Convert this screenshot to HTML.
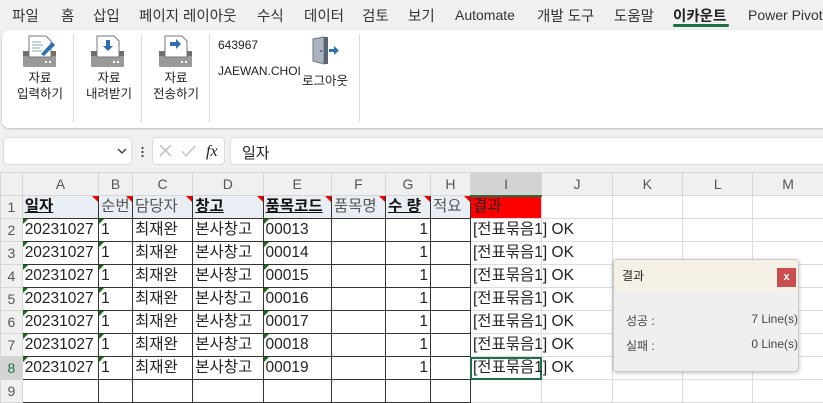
<!DOCTYPE html>
<html><head><meta charset="utf-8"><style>
*{box-sizing:border-box;margin:0;padding:0}
body{width:823px;height:403px;overflow:hidden;background:#f0f0f0;font-family:"Liberation Sans","Noto Sans CJK KR",sans-serif;position:relative;color:#222}
.tab{position:absolute;top:5px;font-size:14.5px;color:#333;white-space:nowrap}
.rib{position:absolute;left:2px;top:30px;width:830px;height:98px;background:#fff;border-radius:7px;box-shadow:0 1px 2px #bbb}
.sep{position:absolute;top:4px;width:1px;height:88px;background:#ddd}
.lbl{position:absolute;font-size:12.5px;color:#222;text-align:center;line-height:16px;width:60px}
.fb{position:absolute;background:#fff;border:1px solid #ddd;border-radius:4px}
table{position:absolute;left:0;top:172px;border-collapse:collapse;table-layout:fixed;width:834px;background:#fff;font-size:15.5px}
td{height:23px;border:1px solid #dcdcdc;padding:0 2px;white-space:nowrap;overflow:visible;position:relative;line-height:20px}
tr.h td{background:#f0f0f0;color:#555;text-align:center;font-size:14px;border-color:#d6d6d6}
td.rh{background:#f0f0f0;color:#555;text-align:center;font-size:14px;padding:0;border-color:#d6d6d6}
td.b{border-color:#333}
td.h1{background:#e9eef5;border-color:#333;color:#555}
td.u{font-weight:bold;text-decoration:underline;color:#111}
td.r{text-align:right}
.rt:after{content:"";position:absolute;right:0;top:0;border-top:6px solid #e00;border-left:6px solid transparent}
.gt:before{content:"";position:absolute;left:0;top:0;border-top:5px solid #107010;border-right:5px solid transparent}
.ok{overflow:visible}
.ok span{position:absolute;left:2px;top:1px;z-index:2}
</style></head><body>
<div class="tab" style="left:12px">파일</div>
<div class="tab" style="left:61px">홈</div>
<div class="tab" style="left:93px">삽입</div>
<div class="tab" style="left:139px">페이지 레이아웃</div>
<div class="tab" style="left:257px">수식</div>
<div class="tab" style="left:304px">데이터</div>
<div class="tab" style="left:362px">검토</div>
<div class="tab" style="left:408px">보기</div>
<div class="tab" style="left:455px;top:7px;font-size:14px">Automate</div>
<div class="tab" style="left:537px">개발 도구</div>
<div class="tab" style="left:614px">도움말</div>
<div class="tab" style="left:673px;font-weight:bold;color:#222">이카운트</div>
<div style="position:absolute;left:673px;top:24px;width:56px;height:3px;background:#1e7145;border-radius:2px"></div>
<div class="tab" style="left:748px;top:7px;font-size:14px">Power Pivot</div>

<div class="rib">
 <div class="sep" style="left:71px"></div><div class="sep" style="left:139px"></div><div class="sep" style="left:207px"></div><div class="sep" style="left:357px"></div>
</div>
<svg style="position:absolute;left:0;top:30px" width="220" height="45">
 <g>
  <rect x="23" y="21" width="33" height="16" fill="#9a9a9a" rx="1"/>
  <rect x="23" y="21" width="33" height="5" fill="#6f6f6f"/>
  <rect x="45" y="31" width="2" height="2" fill="#fff"/><rect x="49" y="31" width="2" height="2" fill="#fff"/>
  <path d="M29 6 H46 L51 11 V27 H29 Z" fill="#fff" stroke="#777"/>
 </g>
 <path d="M32 12h9M32 15h11M32 18h8M32 21h10" stroke="#8aa" stroke-width="1"/>
 <path d="M41 24 L52 12 L55 15 L44 26 Z" fill="#2f6fb5"/>
 <g transform="translate(68,0)"><rect x="23" y="21" width="33" height="16" fill="#9a9a9a" rx="1"/><rect x="23" y="21" width="33" height="5" fill="#6f6f6f"/><rect x="45" y="31" width="2" height="2" fill="#fff"/><rect x="49" y="31" width="2" height="2" fill="#fff"/><path d="M29 6 H46 L51 11 V27 H29 Z" fill="#fff" stroke="#777"/><path d="M38 10v6h-3l5 5 5-5h-3v-6z" fill="#2f6fb5"/></g>
 <g transform="translate(136,0)"><rect x="23" y="21" width="33" height="16" fill="#9a9a9a" rx="1"/><rect x="23" y="21" width="33" height="5" fill="#6f6f6f"/><rect x="45" y="31" width="2" height="2" fill="#fff"/><rect x="49" y="31" width="2" height="2" fill="#fff"/><path d="M29 6 H46 L51 11 V27 H29 Z" fill="#fff" stroke="#777"/><path d="M34 12h6v-3l5 5-5 5v-3h-6z" fill="#2f6fb5"/></g>
</svg>
<svg style="position:absolute;left:310px;top:36px" width="32" height="30">
 <path d="M3 3 L14 1 V28 L3 25 Z" fill="#aab4c0" stroke="#6a7480"/>
 <rect x="14" y="1" width="4" height="27" fill="#5a6470"/>
 <circle cx="11" cy="15" r="1" fill="#555"/>
 <path d="M19 13h5v-3l5 4.5-5 4.5v-3h-5z" fill="#2f6fb5"/>
</svg>
<div class="lbl" style="left:10px;top:70px">자료<br>입력하기</div>
<div class="lbl" style="left:79px;top:70px">자료<br>내려받기</div>
<div class="lbl" style="left:146px;top:70px">자료<br>전송하기</div>
<div style="position:absolute;left:218px;top:38px;font-size:12px">643967</div>
<div style="position:absolute;left:218px;top:64px;font-size:12px">JAEWAN.CHOI</div>
<div style="position:absolute;left:302px;top:70px;font-size:12.5px">로그아웃</div>

<div class="fb" style="left:3px;top:137px;width:129px;height:28px"></div>
<svg style="position:absolute;left:116px;top:147px" width="12" height="8"><path d="M2 2l4 4 4-4" stroke="#333" fill="none" stroke-width="1.3"/></svg>
<div style="position:absolute;left:141px;top:146px;width:3px;height:12px;background:radial-gradient(circle,#444 1px,transparent 1.3px) 0 0/3px 4px"></div>
<div class="fb" style="left:152px;top:137px;width:73px;height:28px"></div>
<svg style="position:absolute;left:157px;top:142px" width="68" height="18">
 <path d="M3 3l11 11M14 3L3 14" stroke="#bbb" stroke-width="1.3"/>
 <path d="M25 9l4 5 9-10" stroke="#bbb" stroke-width="1.3" fill="none"/>
 <text x="49" y="14" font-family="Liberation Serif,serif" font-style="italic" font-size="16" fill="#222">fx</text>
</svg>
<div class="fb" style="left:230px;top:137px;width:600px;height:28px;font-size:15px;padding:4px 0 0 11px">일자</div>

<table>
<colgroup><col style="width:21.4px"><col style="width:75.4px"><col style="width:33.4px"><col style="width:59.4px"><col style="width:69.4px"><col style="width:67.4px"><col style="width:53.4px"><col style="width:44.4px"><col style="width:39.4px"><col style="width:70.4px"><col style="width:69.4px"><col style="width:69.4px"><col style="width:69.4px"><col style="width:69.4px"><col style="width:10px"></colgroup>
<tr class="h"><td style="background:#f0f0f0"></td><td>A</td><td>B</td><td>C</td><td>D</td><td>E</td><td>F</td><td>G</td><td>H</td><td style="background:#d3d3d3;border-bottom:2px solid #1e7145">I</td><td>J</td><td>K</td><td>L</td><td>M</td><td></td></tr>
<tr><td class="rh">1</td><td class="h1 u rt">일자</td><td class="h1 rt">순번</td><td class="h1 rt">담당자</td><td class="h1 u rt">창고</td><td class="h1 u rt">품목코드</td><td class="h1 rt">품목명</td><td class="h1 u rt">수 량</td><td class="h1 rt">적요</td><td style="background:#f00;color:#222">결과</td><td></td><td></td><td></td><td></td><td></td></tr>
<tr><td class="rh">2</td><td class="b gt">20231027</td><td class="b gt">1</td><td class="b">최재완</td><td class="b">본사창고</td><td class="b gt">00013</td><td class="b"></td><td class="b r">1</td><td class="b"></td><td class="ok"><span>[전표묶음1] OK</span></td><td></td><td></td><td></td><td></td><td></td></tr>
<tr><td class="rh">3</td><td class="b gt">20231027</td><td class="b gt">1</td><td class="b">최재완</td><td class="b">본사창고</td><td class="b gt">00014</td><td class="b"></td><td class="b r">1</td><td class="b"></td><td class="ok"><span>[전표묶음1] OK</span></td><td></td><td></td><td></td><td></td><td></td></tr>
<tr><td class="rh">4</td><td class="b gt">20231027</td><td class="b gt">1</td><td class="b">최재완</td><td class="b">본사창고</td><td class="b gt">00015</td><td class="b"></td><td class="b r">1</td><td class="b"></td><td class="ok"><span>[전표묶음1] OK</span></td><td></td><td></td><td></td><td></td><td></td></tr>
<tr><td class="rh">5</td><td class="b gt">20231027</td><td class="b gt">1</td><td class="b">최재완</td><td class="b">본사창고</td><td class="b gt">00016</td><td class="b"></td><td class="b r">1</td><td class="b"></td><td class="ok"><span>[전표묶음1] OK</span></td><td></td><td></td><td></td><td></td><td></td></tr>
<tr><td class="rh">6</td><td class="b gt">20231027</td><td class="b gt">1</td><td class="b">최재완</td><td class="b">본사창고</td><td class="b gt">00017</td><td class="b"></td><td class="b r">1</td><td class="b"></td><td class="ok"><span>[전표묶음1] OK</span></td><td></td><td></td><td></td><td></td><td></td></tr>
<tr><td class="rh">7</td><td class="b gt">20231027</td><td class="b gt">1</td><td class="b">최재완</td><td class="b">본사창고</td><td class="b gt">00018</td><td class="b"></td><td class="b r">1</td><td class="b"></td><td class="ok"><span>[전표묶음1] OK</span></td><td></td><td></td><td></td><td></td><td></td></tr>
<tr><td class="rh" style="color:#1e7145;background:#d3d3d3">8</td><td class="b gt">20231027</td><td class="b gt">1</td><td class="b">최재완</td><td class="b">본사창고</td><td class="b gt">00019</td><td class="b"></td><td class="b r">1</td><td class="b"></td><td class="ok" style="outline:2px solid #1e7145;outline-offset:-2px"><span>[전표묶음1] OK</span></td><td></td><td></td><td></td><td></td><td></td></tr>
<tr><td class="rh">9</td><td class="b"></td><td class="b"></td><td class="b"></td><td class="b"></td><td class="b"></td><td class="b"></td><td class="b"></td><td class="b"></td><td></td><td></td><td></td><td></td><td></td><td></td></tr>
</table>

<div style="position:absolute;left:613px;top:259px;width:186px;height:113px;background:#efefef;border:1px solid #ccc;border-radius:4px;box-shadow:0 1px 4px rgba(0,0,0,.25);overflow:hidden;font-size:12px;z-index:5">
 <div style="height:31px;background:#f6f1e6;padding:7px 0 0 8px;color:#222">결과</div>
 <div style="position:absolute;right:2px;top:8px;width:19px;height:19px;background:#c94f4f;color:#fff;font-size:11px;text-align:center;line-height:18px;font-weight:bold">x</div>
 <div style="position:absolute;left:12px;top:52px;color:#444">성공 :</div>
 <div style="position:absolute;right:0;top:52px;color:#444">7 Line(s)</div>
 <div style="position:absolute;left:12px;top:77px;color:#444">실패 :</div>
 <div style="position:absolute;right:0;top:77px;color:#444">0 Line(s)</div>
</div>
</body></html>
